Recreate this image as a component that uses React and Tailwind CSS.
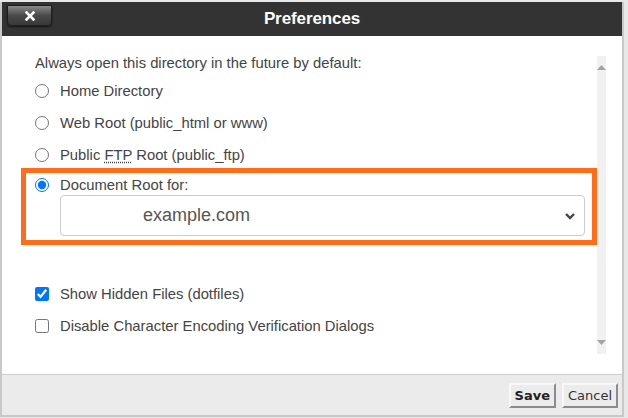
export default function App() {
  const font = { fontFamily: '"Liberation Sans", Arial, sans-serif' };

  return (
    <div className="w-[628px] h-[418px] bg-[#e8e8e8] pt-[2px] overflow-hidden" style={font}>
      <div className="w-[624px] border-x-2 border-b-2 border-[#c9c9c9] bg-white">
        {/* header */}
        <div className="relative h-[34px] bg-[#333333] flex items-center justify-center">
          <button className="absolute left-[5px] top-[3px] w-[45px] h-[21px] rounded-b-[4px] border border-[#1f1f1f] bg-gradient-to-b from-[#8a8a8a] via-[#4a4a4a] to-[#383838] flex items-center justify-center shadow-[0_1px_2px_rgba(0,0,0,0.6)]">
            <svg width="10" height="10" viewBox="0 0 10 10">
              <path d="M1.5 1.5 L8.5 8.5 M8.5 1.5 L1.5 8.5" stroke="#fff" strokeWidth="2.6" strokeLinecap="square" />
            </svg>
          </button>
          <span className="text-white font-bold text-[17px] tracking-[-0.1px]">Preferences</span>
        </div>

        {/* body */}
        <div className="h-[338px] flex">
          <div className="flex-1 pl-[33px] pt-[17px] text-[14.8px] text-[#444]">
            <div className="h-[20px] leading-[20px]">Always open this directory in the future by default:</div>
            <div className="mt-[2px]">
              <label className="h-8 flex items-center gap-[11px]">
                <input type="radio" name="dir" className="w-[14px] h-[14px] m-0" />
                <span>Home Directory</span>
              </label>
              <label className="h-8 flex items-center gap-[11px]">
                <input type="radio" name="dir" className="w-[14px] h-[14px] m-0" />
                <span>Web Root (public_html or www)</span>
              </label>
              <label className="h-8 flex items-center gap-[11px]">
                <input type="radio" name="dir" className="w-[14px] h-[14px] m-0" />
                <span>
                  Public <abbr className="underline decoration-dotted underline-offset-2">FTP</abbr> Root (public_ftp)
                </span>
              </label>
            </div>
            <div className="-ml-[14px] -mt-[3px] w-[576px] border-[5px] border-[#ff6c1a] pl-[9px] pr-[7px] pt-[2px] pb-[4px]">
              <label className="h-[20px] flex items-center gap-[11px]">
                <input type="radio" name="dir" defaultChecked className="w-[14px] h-[14px] m-0" />
                <span>Document Root for:</span>
              </label>
              <div className="ml-[25px] h-[41px] rounded-[4px] border border-[#cccccc] bg-white flex items-center justify-between pl-[82px] pr-[8px]">
                <span className="text-[18px] text-[#555]">example.com</span>
                <svg width="12" height="8" viewBox="0 0 12 8">
                  <path d="M2 2 L6 6 L10 2" fill="none" stroke="#444" strokeWidth="2.4" />
                </svg>
              </div>
            </div>
            <div className="mt-[33px]">
              <label className="h-8 flex items-center gap-[11px]">
                <input type="checkbox" defaultChecked className="w-[14px] h-[14px] m-0" />
                <span>Show Hidden Files (dotfiles)</span>
              </label>
              <label className="h-8 flex items-center gap-[11px]">
                <input type="checkbox" className="w-[14px] h-[14px] m-0" />
                <span>Disable Character Encoding Verification Dialogs</span>
              </label>
            </div>
          </div>
          <div className="w-[21px] h-[298px] mt-[20px] mr-[16px] bg-[#f1f1f1] flex flex-col items-center justify-between py-[9px]">
            <svg width="9" height="5" viewBox="0 0 9 5">
              <path d="M0 5 L4.5 0 L9 5 Z" fill="#a3a3a3" />
            </svg>
            <svg width="9" height="5" viewBox="0 0 9 5">
              <path d="M0 0 L4.5 5 L9 0 Z" fill="#a3a3a3" />
            </svg>
          </div>
        </div>

        {/* footer */}
        <div className="h-[41px] border-t border-[#cccccc] bg-[#ebebeb] flex justify-end items-start pt-[8px] pr-[4px] gap-[6px]" style={{ fontFamily: '"DejaVu Sans", Verdana, sans-serif' }}>
          <button className="h-[25px] px-[4px] bg-[#ececec] border-2 border-t-[#f8f8f8] border-l-[#f8f8f8] border-r-[#8c8c8c] border-b-[#8c8c8c] text-[13px] font-bold text-[#222]">
            Save
          </button>
          <button className="h-[25px] px-[4px] bg-[#ececec] border-2 border-t-[#f8f8f8] border-l-[#f8f8f8] border-r-[#8c8c8c] border-b-[#8c8c8c] text-[13px] text-[#333]">
            Cancel
          </button>
        </div>
      </div>
    </div>
  );
}
